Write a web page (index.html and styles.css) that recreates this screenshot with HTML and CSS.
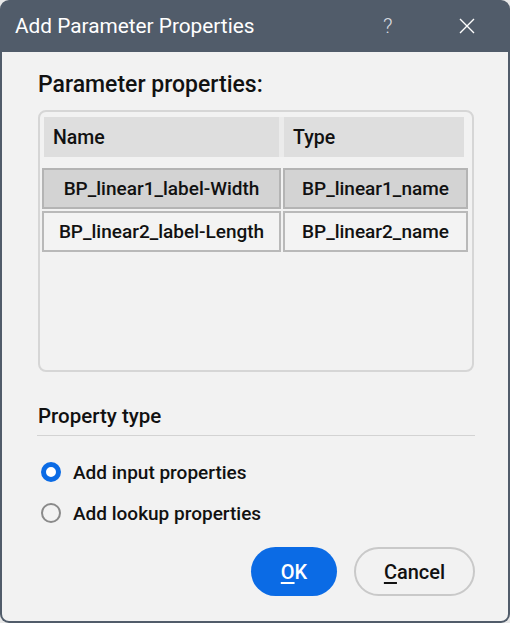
FILE: index.html
```html
<!DOCTYPE html>
<html lang="en">
<head>
<meta charset="utf-8">
<title>Add Parameter Properties</title>
<link rel="stylesheet" href="styles.css">
</head>
<body>
<div class="window">
  <div class="titlebar">
    <span class="title">Add Parameter Properties</span>
    <span class="help">?</span>
    <span class="close">
      <svg width="16" height="16" viewBox="0 0 16 16"><path d="M1 1 L15 15 M15 1 L1 15" stroke="#ffffff" stroke-width="1.4" fill="none"/></svg>
    </span>
  </div>
  <div class="content">
    <div class="section-title">Parameter properties:</div>
    <div class="table-frame">
      <div class="thead">
        <div class="th th-name">Name</div>
        <div class="th th-type">Type</div>
      </div>
      <div class="trow selected">
        <div class="td">BP_linear1_label-Width</div>
        <div class="td">BP_linear1_name</div>
      </div>
      <div class="trow">
        <div class="td">BP_linear2_label-Length</div>
        <div class="td">BP_linear2_name</div>
      </div>
    </div>
    <div class="group-title">Property type</div>
    <div class="separator"></div>
    <div class="radio-list">
      <div class="radio-row"><span class="radio checked"></span><span class="radio-label">Add input properties</span></div>
      <div class="radio-row"><span class="radio"></span><span class="radio-label">Add lookup properties</span></div>
    </div>
    <div class="buttons">
      <button class="btn btn-primary"><u>O</u>K</button>
      <button class="btn btn-secondary"><u>C</u>ancel</button>
    </div>
  </div>
</div>
</body>
</html>
```

FILE: styles.css
```css
* { box-sizing: border-box; }
html, body {
  margin: 0;
  padding: 0;
  background: #e9e9e9;
}
body {
  font-family: Roboto, "Liberation Sans", sans-serif;
  color: #111;
}
.window {
  width: 510px;
  height: 623px;
  background: #515c6a;
  border-radius: 9px;
  padding: 0 2px 2px 2px;
  display: flex;
  flex-direction: column;
  overflow: hidden;
}
.titlebar {
  height: 52px;
  flex: none;
  display: flex;
  align-items: center;
  padding-left: 13px;
  color: #fff;
}
.title {
  font-size: 20.8px;
  line-height: 26px;
  flex: 1;
}
.help {
  font-size: 21px;
  line-height: 26px;
  color: #d8dbe0;
  font-weight: 300;
  width: 20px;
  margin-right: 56px;
}
.close {
  width: 16px;
  height: 16px;
  margin-right: 33px;
  display: flex;
}
.content {
  flex: 1;
  background: #f2f2f2;
  border-radius: 0 0 7px 7px;
  padding: 19px 34px 0 36px;
  display: flex;
  flex-direction: column;
}
.section-title {
  font-size: 23px;
  line-height: 28px;
  font-weight: 500;
}
.table-frame {
  margin-top: 11px;
  height: 262px;
  border: 2px solid #d6d6d6;
  border-radius: 8px;
  padding: 5px 4px 0 2px;
}
.thead {
  display: grid;
  grid-template-columns: 235px 180px;
  column-gap: 5px;
  margin: 0 4px 0 2px;
  height: 40px;
  background: #ebebeb;
}
.th {
  background: #dedede;
  font-size: 19.5px;
  font-weight: 500;
  display: flex;
  align-items: center;
}
.th-name { padding-left: 9px; }
.th-type { padding-left: 9px; }
.trow {
  display: grid;
  grid-template-columns: 239px 185px;
  column-gap: 2px;
  height: 41px;
  margin-top: 2px;
}
.thead + .trow { margin-top: 11px; }
.td {
  border: 2px solid #b9b9b9;
  background: #f3f3f3;
  font-size: 19px;
  font-weight: 500;
  display: flex;
  align-items: center;
  justify-content: center;
  white-space: nowrap;
}
.trow.selected .td {
  background: #d3d3d3;
  border-color: #b4b4b4;
}
.group-title {
  margin-top: 31px;
  font-size: 20.5px;
  font-weight: 500;
  line-height: 26px;
}
.separator {
  margin-top: 6px;
  height: 1px;
  background: #d3d3d3;
  margin-left: -1px;
  margin-right: -1px;
}
.radio-list {
  margin-top: 21px;
  display: flex;
  flex-direction: column;
  row-gap: 11px;
}
.radio-row {
  height: 30px;
  display: flex;
  align-items: center;
}
.radio {
  width: 20px;
  height: 20px;
  border-radius: 50%;
  border: 2px solid #8a8a8a;
  margin-left: 3px;
  margin-right: 12px;
  flex: none;
}
.radio.checked {
  border: 5.5px solid #0b6be5;
  background: #fff;
}
.radio-label {
  font-size: 19px;
  font-weight: 500;
}
.buttons {
  margin-top: 19px;
  display: flex;
  justify-content: flex-end;
  column-gap: 17px;
  margin-right: -1px;
}
.btn {
  height: 49px;
  border-radius: 25px;
  font-family: Roboto, "Liberation Sans", sans-serif;
  font-size: 20px;
  font-weight: 500;
  padding: 0;
  cursor: default;
}
.btn-primary {
  width: 86px;
  background: #0b6be5;
  color: #fff;
  border: none;
}
.btn-secondary {
  width: 121px;
  background: #f2f2f2;
  color: #111;
  border: 2px solid #c9c9c9;
}
.btn u { text-underline-offset: 3px; }
```
